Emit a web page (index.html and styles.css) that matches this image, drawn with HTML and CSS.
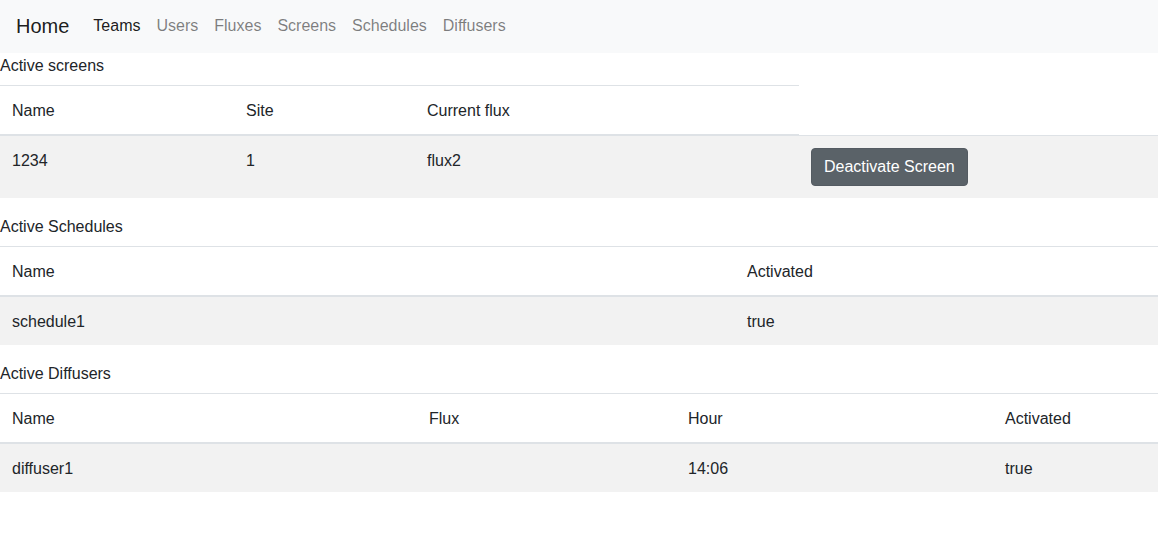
FILE: index.html
```html
<!DOCTYPE html>
<html lang="en">
<head>
<meta charset="utf-8">
<title>Home</title>
<link rel="stylesheet" href="styles.css">
</head>
<body>
<nav class="navbar">
  <a class="brand" href="#">Home</a>
  <ul class="nav">
    <li><a class="nav-link active" href="#">Teams</a></li>
    <li><a class="nav-link" href="#">Users</a></li>
    <li><a class="nav-link" href="#">Fluxes</a></li>
    <li><a class="nav-link" href="#">Screens</a></li>
    <li><a class="nav-link" href="#">Schedules</a></li>
    <li><a class="nav-link" href="#">Diffusers</a></li>
  </ul>
</nav>

<section class="block">
  <label class="title">Active screens</label>
  <table class="table">
    <colgroup>
      <col class="c234"><col class="c181"><col class="c384"><col>
    </colgroup>
    <thead>
      <tr><th>Name</th><th>Site</th><th>Current flux</th></tr>
    </thead>
    <tbody>
      <tr><td>1234</td><td>1</td><td>flux2</td><td class="btn-cell"><button class="btn">Deactivate Screen</button></td></tr>
    </tbody>
  </table>
</section>

<section class="block">
  <label class="title">Active Schedules</label>
  <table class="table">
    <colgroup>
      <col class="c735"><col>
    </colgroup>
    <thead>
      <tr><th>Name</th><th>Activated</th></tr>
    </thead>
    <tbody>
      <tr><td>schedule1</td><td>true</td></tr>
    </tbody>
  </table>
</section>

<section class="block">
  <label class="title">Active Diffusers</label>
  <table class="table">
    <colgroup>
      <col class="c417"><col class="c259"><col class="c317"><col>
    </colgroup>
    <thead>
      <tr><th>Name</th><th>Flux</th><th>Hour</th><th>Activated</th></tr>
    </thead>
    <tbody>
      <tr><td>diffuser1</td><td></td><td>14:06</td><td>true</td></tr>
    </tbody>
  </table>
</section>
</body>
</html>
```

FILE: styles.css
```css
html, body {
  margin: 0;
  padding: 0;
}
body {
  font-family: "Liberation Sans", Arial, sans-serif;
  font-size: 16px;
  line-height: 24px;
  color: #212529;
  background: #fff;
}
a {
  text-decoration: none;
}
.navbar {
  display: flex;
  align-items: center;
  height: 53px;
  padding: 0 16px 2px;
  background: #f8f9fa;
  box-sizing: border-box;
}
.brand {
  font-size: 20px;
  line-height: 30px;
  color: rgba(0, 0, 0, 0.9);
  margin-right: 16px;
}
.nav {
  display: flex;
  list-style: none;
  margin: 0;
  padding: 0;
}
.nav-link {
  display: block;
  padding: 8px;
  color: rgba(0, 0, 0, 0.5);
}
.nav-link.active {
  color: rgba(0, 0, 0, 0.9);
}
.block {
  display: block;
}
.title {
  display: inline-block;
  padding-top: 1px;
  margin-bottom: 7px;
}
.table {
  width: 100%;
  border-collapse: collapse;
  margin-bottom: 16px;
  table-layout: fixed;
}
.table th,
.table td {
  padding: 13px 12px 11px;
  text-align: left;
  vertical-align: top;
  font-weight: normal;
  border-top: 1px solid #dee2e6;
}
.table td.btn-cell {
  padding: 12px;
}
.table thead th {
  border-bottom: 2px solid #dee2e6;
  vertical-align: bottom;
}
.table tbody tr {
  background: #f2f2f2;
}
.c234 { width: 234px; }
.c181 { width: 181px; }
.c384 { width: 384px; }
.c735 { width: 735px; }
.c417 { width: 417px; }
.c259 { width: 259px; }
.c317 { width: 317px; }
.btn {
  display: inline-block;
  font-family: inherit;
  font-size: 16px;
  line-height: 24px;
  padding: 6px 12px;
  color: #fff;
  background: #5a6268;
  border: 1px solid #545b62;
  border-radius: 4px;
}
```
